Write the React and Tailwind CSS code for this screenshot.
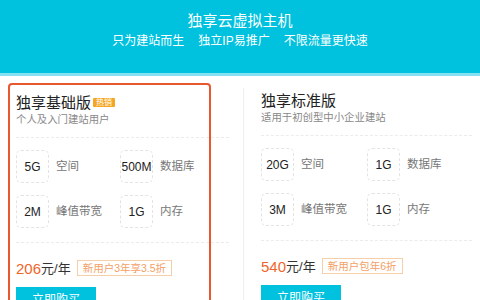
import React from "react";

const font = { fontFamily: '"Liberation Sans", "Noto Sans CJK SC", sans-serif' };

const Spec = ({ value, label }) => (
  <div className="flex items-center">
    <div className="w-[33px] h-[33px] border border-dashed border-[#e3e3e3] rounded-[5px] flex items-center justify-center text-[12px] text-[#222]">
      {value}
    </div>
    <span className="ml-[7px] text-[11.5px] text-[#777]">{label}</span>
  </div>
);

const Plan = ({ title, hot, desc, specs, price, tag, col2, divExtra }) => (
  <div>
    <div className="flex items-center h-[17px] mt-[9px]">
      <span className="text-[15px] text-[#222] leading-none">{title}</span>
      {hot && (
        <span className="ml-[2px] bg-[#f5a623] text-white text-[8px] leading-[9px] px-[3px] h-[9px] rounded-[1px]">
          热销
        </span>
      )}
    </div>
    <div className="text-[10.4px] text-[#888] mt-[2px] leading-[14px]">{desc}</div>
    <div className={`border-t border-dashed border-[#ececec] mt-[10px] ${divExtra}`} />
    <div className="grid mt-[12px] gap-y-[12px]" style={{ gridTemplateColumns: `${col2}px 1fr` }}>
      {specs.map(([v, l]) => (
        <Spec key={l} value={v} label={l} />
      ))}
    </div>
    <div className={`border-t border-dashed border-[#ececec] mt-[14px] ${divExtra}`} />
    <div className="flex items-center mt-[17px] h-[16px]">
      <span className="text-[15px] text-[#f0652a] leading-none">{price}</span>
      <span className="text-[13px] text-[#333] leading-none">元/年</span>
      <span className="ml-[6px] border border-[#f6cfa8] text-[#f3a065] text-[10.5px] h-[16px] leading-[14px] px-[5px]">
        {tag}
      </span>
    </div>
    <div className="mt-[11px] w-[80px] h-[26px] bg-[#00c1de] text-white text-[12px] flex items-center justify-center">
      立即购买
    </div>
  </div>
);

export default function App() {
  return (
    <div className="w-[480px] h-[300px] overflow-hidden bg-white" style={font}>
      <div className="h-[73px] bg-[#00c1de] flex flex-col items-center text-white">
        <div className="text-[15px] mt-[12px] leading-[18px]">独享云虚拟主机</div>
        <div className="text-[12px] mt-[3px] leading-[16px] flex gap-[14px]">
          <span>只为建站而生</span>
          <span>独立IP易推广</span>
          <span>不限流量更快速</span>
        </div>
      </div>
      <div className="h-[3px] bg-[#86e0f1]" />
      <div className="flex">
        <div className="ml-[8px] mt-[7px] w-[203px] h-[240px] border-2 border-[#e8572e] rounded-[4px] pl-[6px] shrink-0">
          <Plan
            title="独享基础版"
            hot
            desc="个人及入门建站用户"
            col2={104}
            divExtra="mr-[-20px]"
            specs={[
              ["5G", "空间"],
              ["500M", "数据库"],
              ["2M", "峰值带宽"],
              ["1G", "内存"],
            ]}
            price="206"
            tag="新用户3年享3.5折"
          />
        </div>
        <div className="ml-[32px] mt-[12px] h-[240px] border-l border-[#efefef] pl-[17px] flex-1 pr-[8px]">
          <div className="-mt-[5px]">
            <Plan
              title="独享标准版"
              desc="适用于初创型中小企业建站"
              col2={106}
              divExtra=""
              specs={[
                ["20G", "空间"],
                ["1G", "数据库"],
                ["3M", "峰值带宽"],
                ["1G", "内存"],
              ]}
              price="540"
              tag="新用户包年6折"
            />
          </div>
        </div>
      </div>
    </div>
  );
}
